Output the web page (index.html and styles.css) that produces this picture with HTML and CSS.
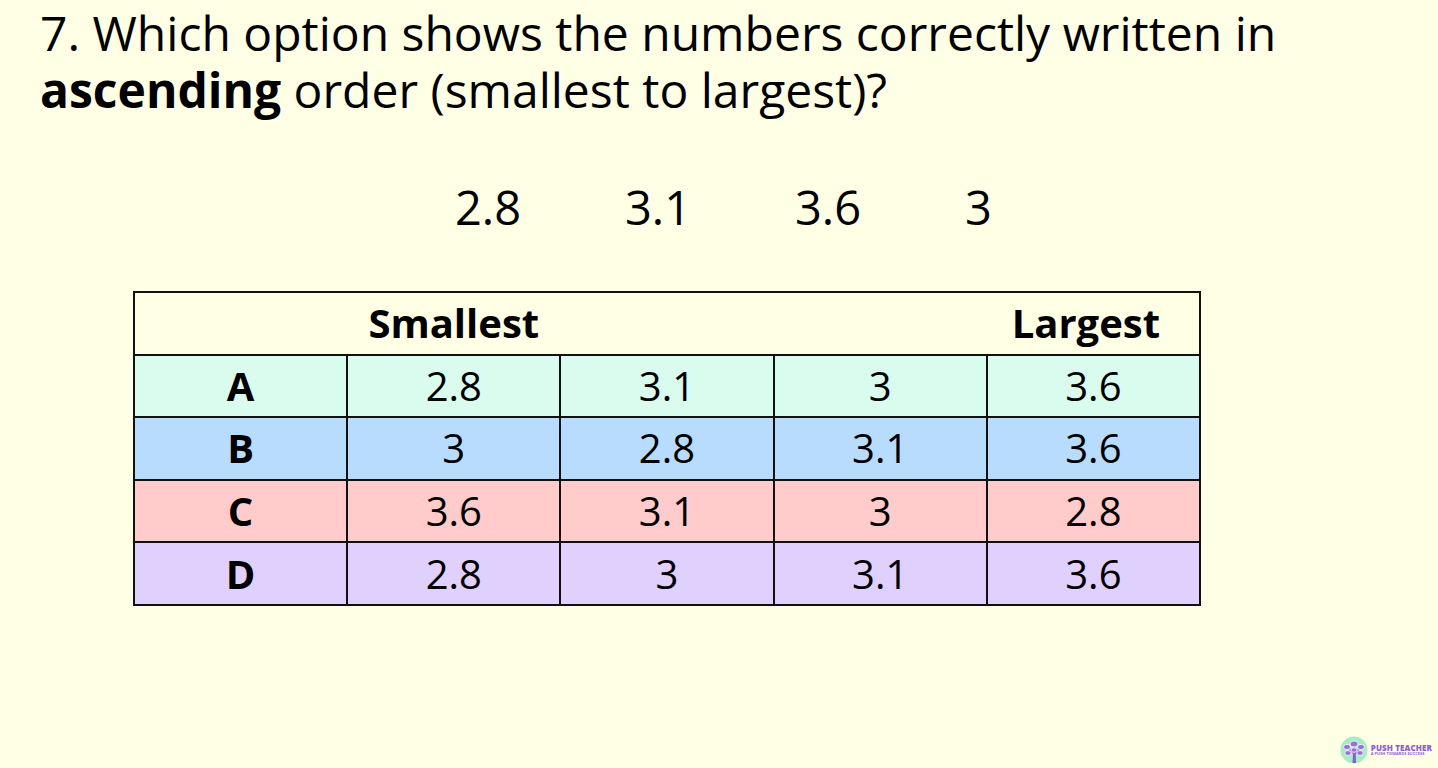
FILE: index.html
```html
<!DOCTYPE html>
<html>
<head>
<meta charset="utf-8">
<link rel="stylesheet" href="styles.css">
</head>
<body>
<div class="slide">
  <h1 class="question">7. Which option shows the numbers correctly written in <b>ascending</b> order (smallest to largest)?</h1>
  <div class="numbers">
    <span class="num">2.8</span>
    <span class="num">3.1</span>
    <span class="num">3.6</span>
    <span class="num">3</span>
  </div>
  <table class="options">
    <tr class="head">
      <td></td><td>Smallest</td><td></td><td></td><td class="largest">Largest</td>
    </tr>
    <tr class="row-a"><th>A</th><td>2.8</td><td>3.1</td><td>3</td><td>3.6</td></tr>
    <tr class="row-b"><th>B</th><td>3</td><td>2.8</td><td>3.1</td><td>3.6</td></tr>
    <tr class="row-c"><th>C</th><td>3.6</td><td>3.1</td><td>3</td><td>2.8</td></tr>
    <tr class="row-d"><th>D</th><td>2.8</td><td>3</td><td>3.1</td><td>3.6</td></tr>
  </table>
  <div class="logo">
    <svg width="30" height="28" viewBox="0 0 30 28">
      <circle cx="15" cy="14" r="13.5" fill="#a6ecc8"/>
      <path d="M13.5 27 L14 18 L10 14 L11 13 L14.5 16 L15 11 L16 11 L16.3 16 L19.5 13 L20.5 14 L16.8 18 L17 27 Z" fill="#8a5fc8"/>
      <ellipse cx="15" cy="8" rx="4" ry="3" fill="#9a6fd6" stroke="#fff" stroke-width="0.8"/>
      <ellipse cx="8" cy="11" rx="3.5" ry="2.6" fill="#9a6fd6" stroke="#fff" stroke-width="0.8"/>
      <ellipse cx="22" cy="11" rx="3.5" ry="2.6" fill="#9a6fd6" stroke="#fff" stroke-width="0.8"/>
      <ellipse cx="9" cy="17" rx="3.2" ry="2.4" fill="#9a6fd6" stroke="#fff" stroke-width="0.8"/>
      <ellipse cx="21" cy="17" rx="3.2" ry="2.4" fill="#9a6fd6" stroke="#fff" stroke-width="0.8"/>
      <ellipse cx="15" cy="14" rx="3" ry="2.3" fill="#9a6fd6" stroke="#fff" stroke-width="0.8"/>
    </svg>
    <div class="logo-text">
      <span class="brand">PUSH TEACHER</span>
      <span class="tag">A PUSH TOWARDS SUCCESS</span>
    </div>
  </div>
</div>
</body>
</html>
```
FILE: styles.css
```css
html, body {
  margin: 0;
  padding: 0;
  background: #ffffe5;
}
body {
  width: 1438px;
  height: 768px;
  overflow: hidden;
  font-family: "Open Sans", "DejaVu Sans", sans-serif;
  color: #000;
}
.slide {
  position: relative;
  width: 1438px;
  height: 768px;
  padding: 0 0 0 40px;
  box-sizing: border-box;
}
.question {
  margin: 0;
  padding-top: 4px;
  font-size: 48px;
  font-weight: 400;
  line-height: 57px;
  width: 1330px;
}
.question b {
  font-weight: 700;
}
.numbers {
  display: flex;
  margin: 59px 0 0 415px;
  font-size: 47px;
  line-height: 60px;
}
.num {
  width: 170px;
}
.options {
  margin: 54px 0 0 93px;
  width: 1068px;
  table-layout: fixed;
  border-collapse: collapse;
  border: 2px solid #111;
  font-size: 40px;
}
.options td, .options th {
  height: 60.6px;
  padding: 0;
  text-align: center;
  border: 2px solid #111;
  line-height: 58px;
}
.options th {
  font-weight: 700;
}
.options .head td {
  border-left: none;
  border-right: none;
  font-weight: 700;
  background: #ffffe5;
}
.options .head td.largest {
  padding-right: 14px;
}
.row-a { background: #dafcef; }
.row-b { background: #b8dcfe; }
.row-c { background: #ffcbcb; }
.row-d { background: #e0d0fe; }
.logo {
  position: absolute;
  right: 6px;
  bottom: 4px;
  display: flex;
  align-items: center;
  gap: 2px;
}
.logo-text {
  display: flex;
  flex-direction: column;
  line-height: 1;
}
.brand {
  font-size: 8px;
  font-weight: 800;
  color: #8f5fd2;
  letter-spacing: 0.1px;
}
.tag {
  font-size: 4px;
  font-weight: 700;
  color: #8f5fd2;
}
```
